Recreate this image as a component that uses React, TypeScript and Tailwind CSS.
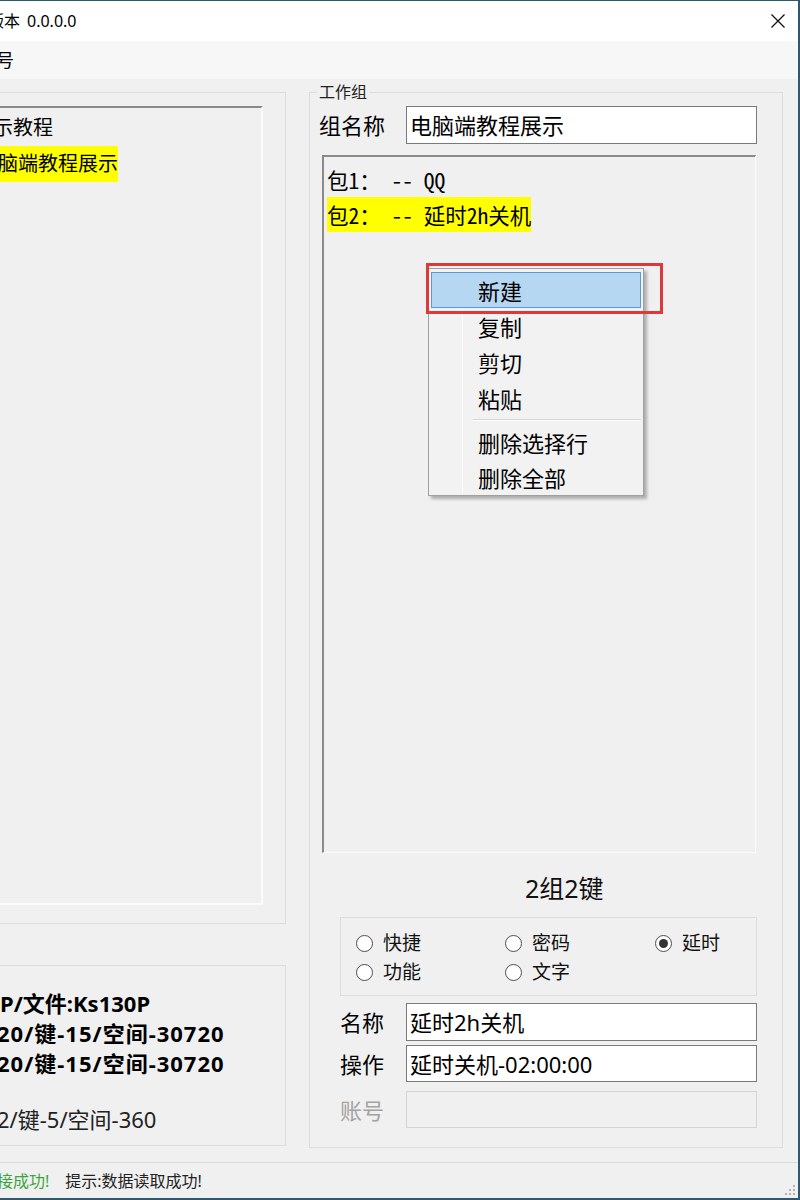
import React from "react";

function Radio({ label, checked }: { label: string; checked?: boolean }) {
  return (
    <div className="flex items-center h-[29px]">
      <span className="w-[17px] h-[17px] rounded-full border border-[#4d4d4d] bg-white flex items-center justify-center shrink-0">
        {checked && <span className="w-[9px] h-[9px] rounded-full bg-[#333333]" />}
      </span>
      <span className="ml-[10px] text-[19px] leading-[29px] text-[#111]">{label}</span>
    </div>
  );
}

function MenuItem({ label, active }: { label: string; active?: boolean }) {
  return (
    <div
      className={
        active
          ? "h-[36px] flex items-center pl-[46px] bg-[#b6d7f2] border border-[#5a98d6] text-[22px] leading-[34px]"
          : "h-[36px] flex items-center pl-[47px] text-[22px] leading-[36px]"
      }
    >
      {label}
    </div>
  );
}

export default function App() {
  return (
    <div className="w-[800px] h-[1200px] overflow-hidden bg-[#f0f0f0] border-t border-r-2 border-b-2 border-[#2a5a6f] flex flex-col text-black font-['Noto_Sans','Noto_Sans_CJK_SC',sans-serif]">
      {/* Title bar */}
      <div className="h-[40px] shrink-0 bg-white flex items-center justify-between pr-[12px]">
        <div className="ml-[-12px] text-[16px] leading-[20px] whitespace-nowrap flex">
          <span>版本</span>
          <span className="ml-[7px]">0.0.0.0</span>
        </div>
        <svg width="16" height="16" viewBox="0 0 16 16">
          <path d="M1.5 1.5 L14.5 14.5 M14.5 1.5 L1.5 14.5" stroke="#111" strokeWidth="1.3" fill="none" />
        </svg>
      </div>
      {/* Menu bar */}
      <div className="h-[38px] shrink-0 bg-[#f7f7f7] flex items-center">
        <span className="ml-[-22px] text-[18px] leading-[22px]">账号</span>
      </div>

      {/* Main */}
      <div className="h-[1083px] shrink-0 flex">
        {/* Left column */}
        <div className="w-[286px] shrink-0 flex flex-col">
          <div className="mt-[13px] h-[832px] border-t border-r border-b border-[#dcdcdc] pt-[13px] pr-[22px]">
            <div className="h-[799px] border-t-2 border-t-[#8a8a8a] border-r-2 border-r-[#fbfbfb] border-b-2 border-b-[#fbfbfb] pt-[2px] overflow-hidden">
              <div className="h-[36px] text-[20px] leading-[36px] whitespace-nowrap">
                <span className="ml-[-27px]">演示教程</span>
              </div>
              <div className="h-[36px] text-[20px] leading-[36px] whitespace-nowrap">
                <span className="ml-[-22px] inline-block h-[36px] bg-[#ffff00]">电脑端教程展示</span>
              </div>
            </div>
          </div>
          <div className="mt-[41px] h-[181px] border-t border-r border-b border-[#dcdcdc] pt-[22px] overflow-hidden">
            <div className="text-[22px] leading-[30px] font-bold whitespace-nowrap">
              <div>P/文件:Ks130P</div>
              <div className="ml-[-3px] tracking-[1px]">20/键-15/空间-30720</div>
              <div className="ml-[-3px] tracking-[1px]">20/键-15/空间-30720</div>
            </div>
            <div className="mt-[26px] ml-[-3px] text-[22px] leading-[30px] whitespace-nowrap text-[#222]">2/键-5/空间-360</div>
          </div>
        </div>

        {/* Right column */}
        <fieldset className="ml-[23px] mt-[4px] w-[474px] self-start border border-[#dcdcdc]">
          <legend className="ml-[7px] px-[2px] text-[16px] leading-[18px] text-[#222]">工作组</legend>
          <div className="pb-[19px]">
            {/* Group name row */}
            <div className="mt-[5px] flex items-center">
              <span className="ml-[9px] w-[87px] text-[22px] leading-[28px]">组名称</span>
              <div className="w-[351px] h-[38px] bg-white border border-[#7a7a7a] flex items-center pl-[3px] text-[22px] leading-[28px] whitespace-nowrap">
                电脑端教程展示
              </div>
            </div>

            {/* List view */}
            <div className="relative ml-[12px] mt-[11px] w-[434px] h-[698px] border-t-2 border-l-2 border-t-[#8a8a8a] border-l-[#8a8a8a] border-r border-b border-r-[#fbfbfb] border-b-[#fbfbfb] pt-[5px] pl-[3px]">
              <div className="h-[35px] text-[21.5px] leading-[35px] whitespace-pre font-['Noto_Sans_Mono_CJK_SC','Liberation_Mono','Noto_Sans_CJK_SC',monospace]">
                包1： -- QQ
              </div>
              <div className="h-[35px] text-[21.5px] leading-[35px] whitespace-pre font-['Noto_Sans_Mono_CJK_SC','Liberation_Mono','Noto_Sans_CJK_SC',monospace]">
                <span className="inline-block h-[35px] bg-[#ffff00]">包2： -- 延时2h关机</span>
              </div>

              {/* Context menu */}
              <div className="absolute left-[104px] top-[111px] w-[216px] bg-[#f2f2f2] border border-[#a0a0a0] shadow-[3px_3px_3px_rgba(0,0,0,0.28)] pt-[3px] px-[2px] font-['Noto_Sans_CJK_SC',sans-serif]">
                <div className="absolute left-[33px] top-[40px] bottom-[2px] w-px bg-[#fcfcfc]" />
                <MenuItem label="新建" active />
                <MenuItem label="复制" />
                <MenuItem label="剪切" />
                <MenuItem label="粘贴" />
                <div className="py-[3px] ml-[42px]">
                  <div className="h-px bg-[#d4d4d4]" />
                  <div className="h-px bg-white" />
                </div>
                <MenuItem label="删除选择行" />
                <div className="h-[35px] flex items-center pl-[47px] text-[22px] leading-[35px]">删除全部</div>
              </div>
              {/* Red highlight rectangle */}
              <div className="absolute left-[102px] top-[106px] w-[237px] h-[51px] border-[3px] border-[#dc3a3a]" />
            </div>

            {/* Count */}
            <div className="mt-[20px] pl-[215px] text-[25px] leading-[30px] text-[#111]">2组2键</div>

            {/* Radio box */}
            <div className="ml-[30px] mt-[14px] w-[417px] h-[79px] border border-[#dcdcdc] pt-[11px] pl-[15px] grid grid-cols-[149px_150px_1fr] content-start">
              <Radio label="快捷" />
              <Radio label="密码" />
              <Radio label="延时" checked />
              <Radio label="功能" />
              <Radio label="文字" />
            </div>

            {/* Name */}
            <div className="mt-[7px] ml-[30px] flex items-center">
              <span className="w-[66px] text-[22px] leading-[28px]">名称</span>
              <div className="w-[351px] h-[38px] bg-white border border-[#7a7a7a] flex items-center pl-[3px] text-[22px] leading-[28px] whitespace-nowrap">
                延时2h关机
              </div>
            </div>
            {/* Operation */}
            <div className="mt-[4px] ml-[30px] flex items-center">
              <span className="w-[66px] text-[22px] leading-[28px]">操作</span>
              <div className="w-[351px] h-[37px] bg-white border border-[#7a7a7a] flex items-center pl-[3px] text-[22px] leading-[28px] whitespace-nowrap">
                延时关机-02:00:00
              </div>
            </div>
            {/* Account (disabled) */}
            <div className="mt-[9px] ml-[30px] flex items-center">
              <span className="w-[66px] text-[22px] leading-[28px] text-[#a3a3a3]">账号</span>
              <div className="w-[351px] h-[37px] bg-[#f0f0f0] border border-[#d4d4d4]" />
            </div>
          </div>
        </fieldset>
      </div>

      {/* Status bar */}
      <div className="h-[36px] shrink-0 border-t border-[#dadada] flex items-center relative">
        <span className="ml-[-19px] text-[16px] leading-[20px] text-[#3aa53a] whitespace-nowrap">连接成功!</span>
        <span className="ml-[16px] text-[16px] leading-[20px] text-[#222] whitespace-nowrap">提示:数据读取成功!</span>
        <svg className="ml-auto self-end mb-[2px] mr-[2px]" width="12" height="12" viewBox="0 0 12 12">
          <rect x="9" y="1" width="2" height="2" fill="#b5b5b5" />
          <rect x="5" y="5" width="2" height="2" fill="#b5b5b5" />
          <rect x="9" y="5" width="2" height="2" fill="#b5b5b5" />
          <rect x="1" y="9" width="2" height="2" fill="#b5b5b5" />
          <rect x="5" y="9" width="2" height="2" fill="#b5b5b5" />
          <rect x="9" y="9" width="2" height="2" fill="#b5b5b5" />
        </svg>
      </div>
    </div>
  );
}
